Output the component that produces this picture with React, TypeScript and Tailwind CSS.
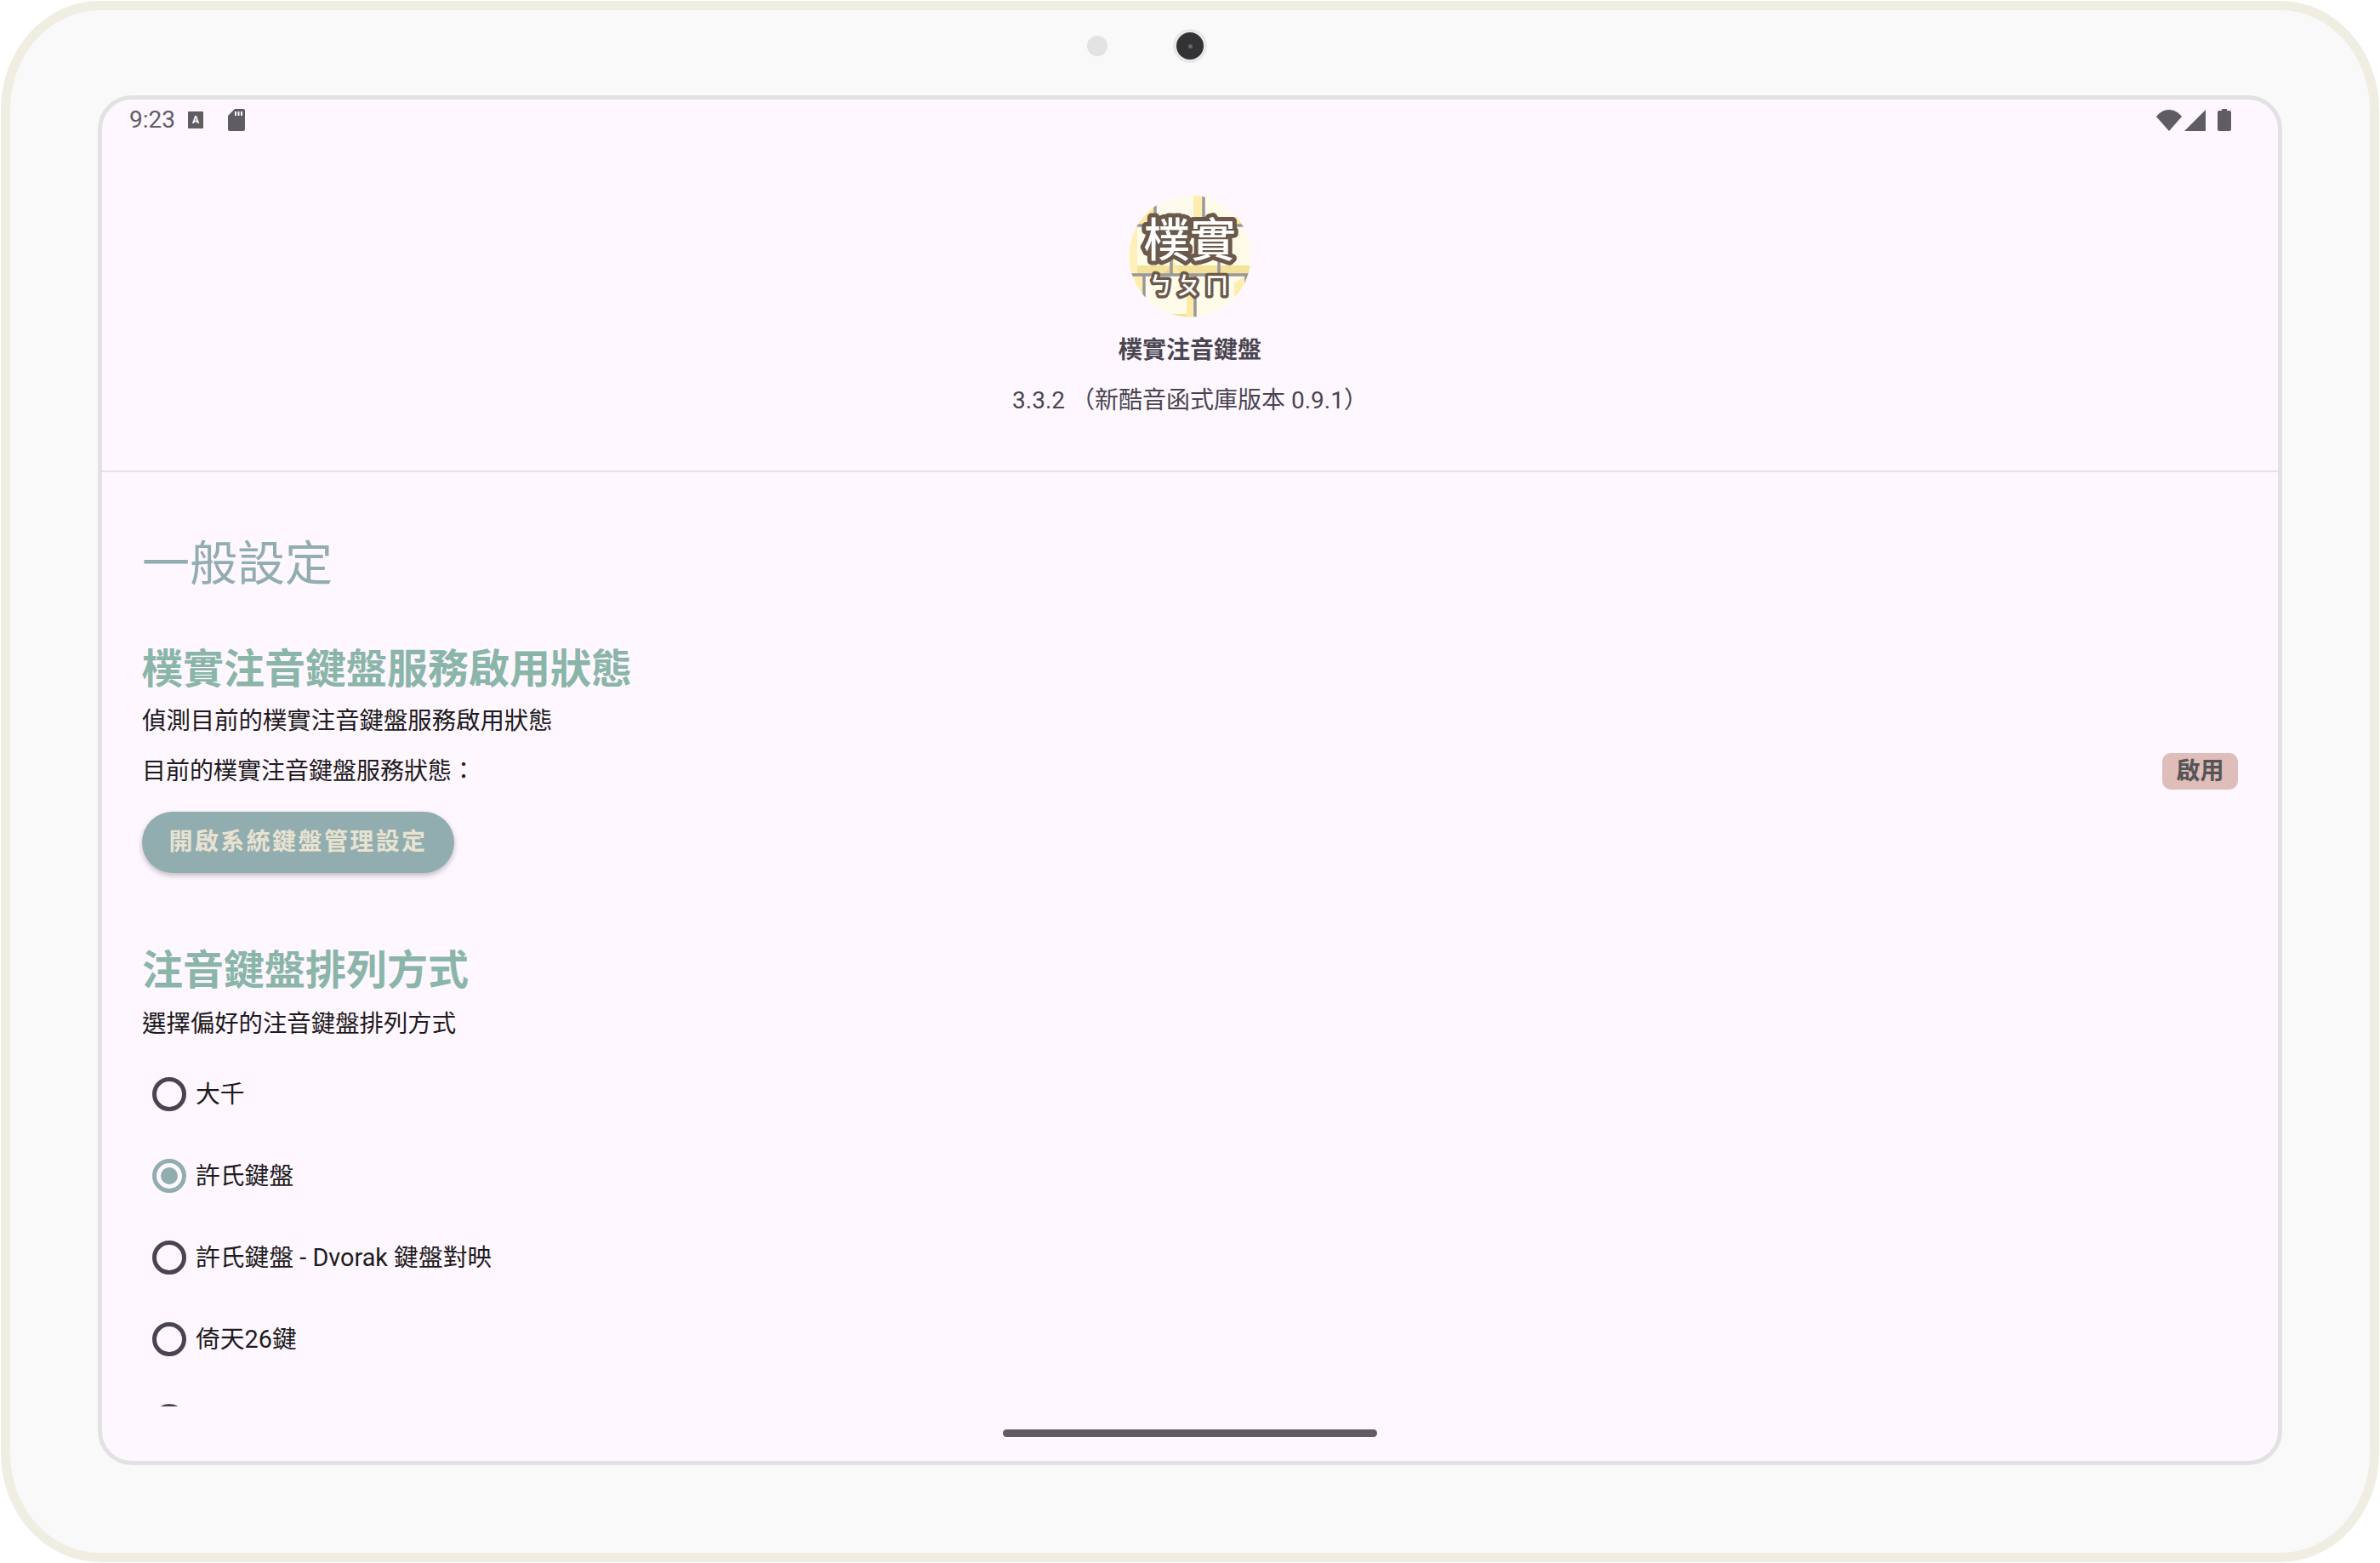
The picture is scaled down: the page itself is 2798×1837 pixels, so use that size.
const FONT = "font-['Roboto','Noto_Sans_CJK_TC',sans-serif]";

function Logo() {
  return (
    <svg width="144" height="144" viewBox="0 0 144 144" className="block">
      <defs>
        <clipPath id="logoClip">
          <circle cx="72" cy="72" r="71.5" />
        </clipPath>
      </defs>
      <g clipPath="url(#logoClip)">
        <rect width="144" height="144" fill="#fffbe9" />
        <rect x="32" y="0" width="44" height="34" fill="#fdfaf0" />
        <rect x="76" y="0" width="10" height="36" fill="#fdeeb0" />
        <path d="M0 36L31 36L31 4L18 20Z" fill="#fbe9a6" />
        <path d="M31 36L88 36L80 26L38 26Z" fill="#f6e4a0" />
        <path d="M88 36L144 36L136 26L96 26Z" fill="#f6e4a0" />
        <rect x="0" y="83" width="144" height="11" fill="#f4e19a" />
        <rect x="0" y="36" width="10" height="58" fill="#fdf0bb" />
        <path d="M40 94L50 83L50 94Z" fill="#ecd68c" />
        <path d="M50 94L50 70L60 94Z" fill="#fbe9a6" />
        <rect x="68" y="94" width="10" height="50" fill="#fdeaa6" />
        <path d="M18 94L0 94L0 120L18 130Z" fill="#fdeeb0" />
        <path d="M18 94L18 130L26 120L26 102Z" fill="#fdfaf0" />
        <path d="M124 104L138 94L138 130L124 124Z" fill="#fdeeb0" />
        <rect x="0" y="140" width="68" height="4" fill="#f4e19a" />
        <g stroke="#98979a" strokeWidth="3.5">
          <path d="M88 0V36M31 0V36M0 36H144M0 94H144M50 36V94M106 36V94M78 94V144M18 94V130M138 94V110" />
        </g>
        <text
          x="72"
          y="73"
          textAnchor="middle"
          fontSize="54"
          fontWeight="500"
          fontFamily="'Noto Sans CJK TC',sans-serif"
          fill="#ffffff"
          stroke="#6b5a4c"
          strokeWidth="10"
          strokeLinejoin="round"
          paintOrder="stroke"
        >
          樸實
        </text>
        <text
          x="73"
          y="117"
          textAnchor="middle"
          fontSize="28"
          fontWeight="500"
          letterSpacing="5"
          fontFamily="'Noto Sans CJK TC',sans-serif"
          fill="#ffffff"
          stroke="#6b5a4c"
          strokeWidth="7"
          strokeLinejoin="round"
          paintOrder="stroke"
        >
          ㄅㄆㄇ
        </text>
      </g>
    </svg>
  );
}

function StatusBar() {
  return (
    <div className="flex h-[48px] items-center justify-between pl-[32px] pr-[55px] text-[#5f5d63]">
      <div className="flex items-center">
        <span className="w-[54px] text-[28px] leading-[32px] font-normal font-['Roboto',sans-serif]">9:23</span>
        <span className="ml-[15px] relative flex h-[20px] w-[18px] items-center justify-center rounded-[1px] bg-[#5f5d63] text-[12px] font-bold leading-none text-white font-['Roboto',sans-serif]">
          A
        </span>
        <svg width="20" height="26" viewBox="0 0 20 26" className="ml-[29px]">
          <path
            fill="#5f5d63"
            fillRule="evenodd"
            d="M8 0H18A2 2 0 0 1 20 2V24A2 2 0 0 1 18 26H2A2 2 0 0 1 0 24V8ZM8 3V8H10V3ZM11.500 3V8H13.500V3ZM15 3V8H17V3Z"
          />
        </svg>
      </div>
      <div className="flex items-center">
        <svg width="30" height="25" viewBox="0 0 30 25">
          <path fill="#5f5d63" d="M15 25L0 8C4 3 9 0 15 0C21 0 26 3 30 8Z" />
        </svg>
        <svg width="25" height="25" viewBox="0 0 25 25" className="ml-[3px]">
          <path fill="#5f5d63" d="M25 0V25H0Z" />
        </svg>
        <svg width="16" height="26" viewBox="0 0 16 26" className="ml-[14px]">
          <path
            fill="#5f5d63"
            d="M5 0H11V2H14A2 2 0 0 1 16 4V24A2 2 0 0 1 14 26H2A2 2 0 0 1 0 24V4A2 2 0 0 1 2 2H5Z"
          />
        </svg>
      </div>
    </div>
  );
}

function Radio({ label, checked }: { label?: string; checked?: boolean }) {
  return (
    <div className="flex h-[96px] items-center pl-[12px]">
      <span
        className={
          checked
            ? "flex h-[40px] w-[40px] items-center justify-center rounded-full border-[5px] border-[#92adb0]"
            : "flex h-[40px] w-[40px] items-center justify-center rounded-full border-[5px] border-[#49454f]"
        }
      >
        {checked && <span className="h-[20px] w-[20px] rounded-full bg-[#92adb0]" />}
      </span>
      {label && <span className="ml-[11px] text-[28.8px] leading-[40px] text-[#1d1b20]">{label}</span>}
    </div>
  );
}

export default function App() {
  return (
    <div className={`h-[1837px] w-[2798px] bg-white pl-[1px] pt-[1px] ${FONT}`}>
      <div className="flex h-[1835px] w-[2796px] flex-col rounded-[116px/128px] border-[11px] border-[#f0ede3] bg-[#f9f9f9] px-[103px]">
        <div className="grid h-[100px] shrink-0 grid-cols-[1fr_auto_1fr] items-center pb-[16px]">
          <div className="flex justify-end pr-[77px]">
            <span className="h-[24px] w-[24px] rounded-full bg-[#e3e3e3]" />
          </div>
          <span className="flex h-[40px] w-[40px] items-center justify-center rounded-full bg-[#e8e8e8]">
            <span className="flex h-[32px] w-[32px] items-center justify-center rounded-full bg-[#333335]">
              <span className="h-[5px] w-[5px] rounded-full bg-[#6a6470]" />
            </span>
          </span>
          <div />
        </div>

        <div className="flex h-[1610px] flex-col overflow-hidden rounded-[40px] border-[5px] border-[#e2e2e2] bg-[#fef7ff]">
          <StatusBar />

          <div className="flex shrink-0 flex-col items-center border-b-[2px] border-[#e8e0e8] pb-[62px] pt-[64px]">
            <Logo />
            <div className="mt-[20px] text-[28px] font-bold leading-[38px] text-[#49454f]">樸實注音鍵盤</div>
            <div className="mt-[20px] text-[28px] leading-[40px] text-[#49454f]">3.3.2 （新酷音函式庫版本 0.9.1）</div>
          </div>

          <div className="h-[1098px] shrink-0 overflow-hidden pl-[47px] pr-[47px]">
            <h1 className="mt-[72px] text-[56px] font-normal leading-[72px] text-[#92adb0]">一般設定</h1>

            <h2 className="mt-[58px] text-[48px] font-bold leading-[60px] text-[#8ab5a8]">樸實注音鍵盤服務啟用狀態</h2>
            <p className="mt-[11px] text-[28.4px] leading-[40px] text-[#1d1b20]">偵測目前的樸實注音鍵盤服務啟用狀態</p>
            <div className="mt-[17px] flex h-[43px] items-center justify-between">
              <span className="text-[28px] leading-[40px] text-[#1d1b20]">目前的樸實注音鍵盤服務狀態：</span>
              <span className="flex h-[43px] w-[89px] items-center justify-center rounded-[10px] bg-[#dfbdb8] text-[28px] font-bold text-[#555555]">
                啟用
              </span>
            </div>
            <button className="mt-[26px] flex h-[72px] w-[367px] items-center justify-center rounded-full bg-[#92adb0] text-[28px] font-bold tracking-[2.4px] text-[#e8e2d0] shadow-[0_3px_6px_rgba(0,0,0,0.25)]">
              開啟系統鍵盤管理設定
            </button>

            <h2 className="mt-[85px] text-[48px] font-bold leading-[60px] text-[#8ab5a8]">注音鍵盤排列方式</h2>
            <p className="mt-[13px] text-[28.4px] leading-[40px] text-[#1d1b20]">選擇偏好的注音鍵盤排列方式</p>

            <div className="mt-[14px]">
              <Radio label="大千" />
              <Radio label="許氏鍵盤" checked />
              <Radio label="許氏鍵盤 - Dvorak 鍵盤對映" />
              <Radio label="倚天26鍵" />
              <Radio />
            </div>
          </div>

          <div className="flex justify-center pt-[27px]">
            <span className="h-[9px] w-[440px] rounded-full bg-[#5f5d63]" />
          </div>
        </div>
      </div>
    </div>
  );
}
